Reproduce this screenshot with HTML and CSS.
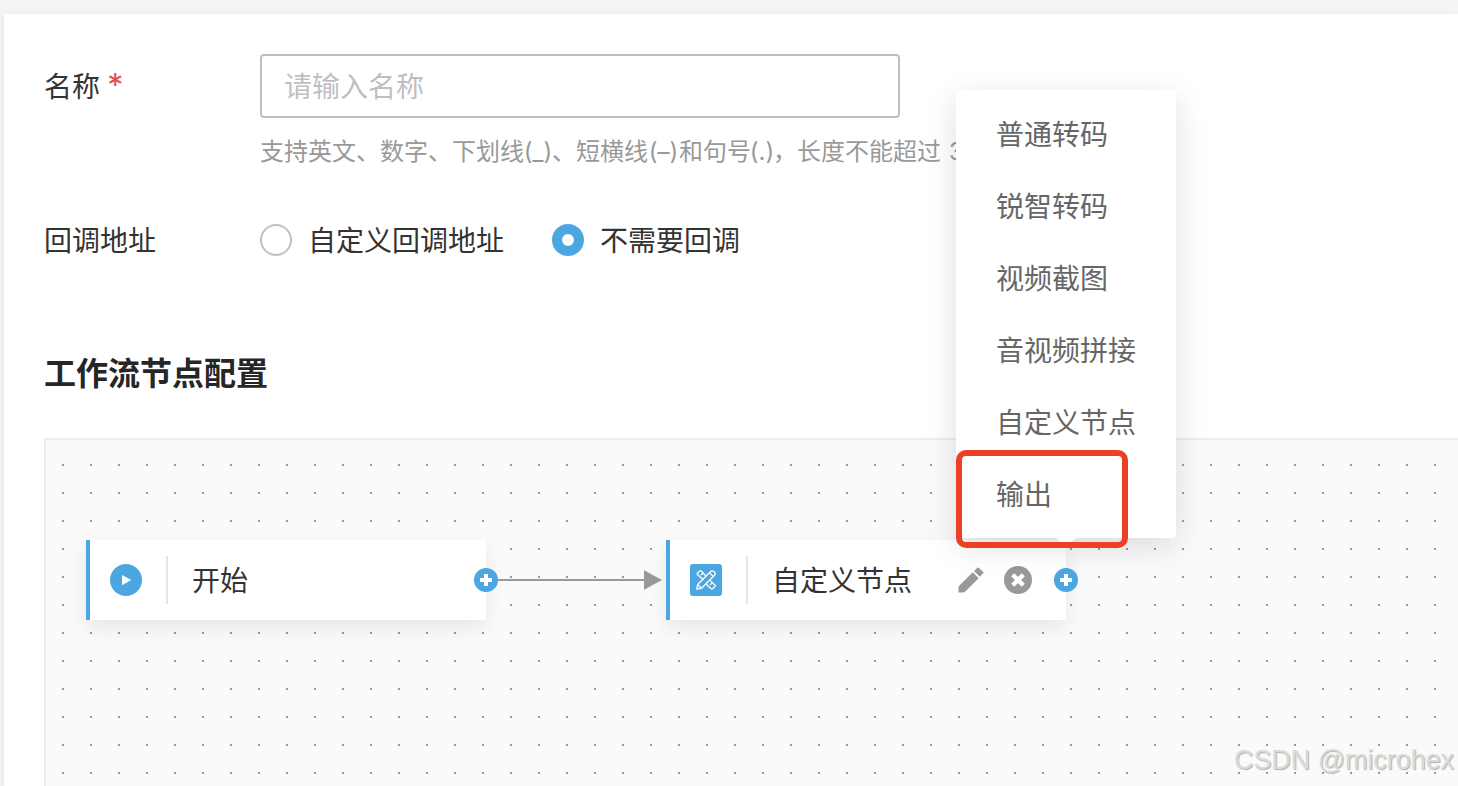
FILE: index.html
```
<!DOCTYPE html>
<html lang="zh-CN">
<head>
  <meta charset="UTF-8">
  <meta name="viewport" content="width=device-width, initial-scale=1.0">
  <title>工作流</title>
  <link rel="stylesheet" href="styles.css">
</head>
<body>
  <div class="panel">
    <div class="form-row name-row">
      <label class="label" for="name">名称 <span class="required">*</span></label>
      <div class="field">
        <input type="text" class="input" id="name" placeholder="请输入名称">
        <p class="hint">支持英文、数字、下划线<span class="underscore">(_)</span>、短横线<span class="dash">(–)</span>和句号<span class="dot">(.)</span>，长度不能超过<span class="count">3</span></p>
      </div>
    </div>

    <div class="form-row callback-row">
      <div class="label">回调地址</div>
      <div class="radios">
        <div class="radio"><span class="circle"></span>自定义回调地址</div>
        <div class="radio"><span class="circle checked"></span>不需要回调</div>
      </div>
    </div>

    <h2>工作流节点配置</h2>

    <div class="canvas">
      <svg class="link" width="166" height="20" viewBox="0 0 166 20">
        <path d="M0 10H148" stroke="#999" stroke-width="2"/>
        <path d="M148 .3L166 10L148 19.7z" fill="#999"/>
      </svg>

      <div class="node start">
        <svg width="32" height="32" viewBox="0 0 32 32">
          <circle cx="16" cy="16" r="16" fill="#4ba6e1"/>
          <path d="M12 11L21.3 16L12 21.2z" fill="#fff"/>
        </svg>
        <span class="divider"></span>
        <span class="title">开始</span>
        <svg class="plus" width="24" height="24" viewBox="0 0 24 24">
          <circle cx="12" cy="12" r="12" fill="#4ba6e1"/>
          <path d="M12 6V18M6 12H18" stroke="#fff" stroke-width="4"/>
        </svg>
      </div>

      <div class="node custom">
        <svg width="32" height="32" viewBox="0 0 32 32">
          <rect width="32" height="32" rx="3" fill="#4ba6e1"/>
          <g fill="none" stroke="#fff" stroke-width="1.3" stroke-linejoin="round" stroke-linecap="round">
            <path d="M13 15.5L7.4 10.4Q6.8 9.8 7.4 9.2L9.8 6.9Q10.5 6.3 11.2 6.9L15.8 12M20.4 16.6L25 21.2Q25.6 21.9 25 22.5L22.5 24.8Q21.8 25.4 21.1 24.8L16.2 20"/>
            <path d="M11.2 10.8L12.8 9.2M20.4 20.6L22.2 18.8"/>
            <path d="M6.8 25.2L7.6 20.5L20.7 7.5Q22.3 6 24.2 7.8Q26.1 9.7 24.5 11.3L11.5 24.3z"/>
            <path d="M7.8 20.7L11.3 24.2M19.5 8.7L23.3 12.5"/>
          </g>
        </svg>
        <span class="divider"></span>
        <span class="title">自定义节点</span>
        <svg class="edit" width="28" height="28" viewBox="0 0 28 28">
          <path d="M1.5 20.5L15.7 6.2L21.7 12.2L7.2 26.5H1.5zM17 5L21 1.3L26.8 6.5L22.8 10.8z" fill="#999"/>
        </svg>
        <svg class="remove" width="28" height="28" viewBox="0 0 28 28">
          <circle cx="14" cy="14" r="14" fill="#999"/>
          <path d="M8.7 8.7L19.3 19.3M19.3 8.7L8.7 19.3" stroke="#fff" stroke-width="4.4"/>
        </svg>
        <svg class="plus" width="24" height="24" viewBox="0 0 24 24">
          <circle cx="12" cy="12" r="12" fill="#4ba6e1"/>
          <path d="M12 6V18M6 12H18" stroke="#fff" stroke-width="4"/>
        </svg>
      </div>
    </div>
  </div>

  <ul class="menu">
    <li>普通转码</li>
    <li>锐智转码</li>
    <li>视频截图</li>
    <li>音视频拼接</li>
    <li>自定义节点</li>
    <li>输出</li>
  </ul>
  <div class="highlight"></div>
  <div class="watermark">CSDN @microhex</div>
</body>
</html>
```
FILE: styles.css
```
* {
  box-sizing: border-box;
}
body {
  position: relative;
  margin: 0;
  height: 786px;
  padding: 14px 0 0 4px;
  overflow: hidden;
  background-color: #f4f4f4;
  color: #333;
  font-family: "Noto Sans CJK SC", sans-serif;
  font-size: 28px;
}
.panel {
  display: flex;
  flex-direction: column;
  height: 772px;
  padding: 40px 0 0 40px;
  background-color: #fff;
  box-shadow: 0 2px 6px rgba(0, 0, 0, 0.08);
}
.form-row {
  display: flex;
}
.label {
  width: 216px;
  line-height: 62px;
}
.name-row {
  height: 154px;
}
.required {
  margin-left: 1px;
  color: #e1504a;
  font-family: Inter, sans-serif;
  font-size: 32px;
  line-height: 1;
}
.input {
  display: block;
  width: 640px;
  height: 64px;
  padding: 0 22px 2px;
  border: 2px solid #bfbfbf;
  border-radius: 4px;
  outline: none;
  font: inherit;
}
.input::placeholder {
  color: #bfbfbf;
}
.hint {
  margin: 14px 0 0;
  color: #999;
  font-size: 24px;
  line-height: 36px;
  white-space: nowrap;
}
.hint span {
  display: inline-flex;
  justify-content: center;
  font-family: Inter, sans-serif;
}
.underscore {
  width: 28px;
}
.dash {
  width: 31px;
}
.dot {
  width: 22px;
}
.count {
  margin-left: 8px;
}
.callback-row {
  height: 64px;
}
.radios {
  display: flex;
  align-items: center;
  gap: 48px;
}
.radio {
  display: flex;
  gap: 16px;
  height: 32px;
  line-height: 30px;
}
.circle {
  width: 32px;
  height: 32px;
  border: 2px solid #bfbfbf;
  border-radius: 50%;
}
.checked {
  border: 10px solid #4ba6e1;
}
h2 {
  margin: 75px 0 0;
  color: #262626;
  font-size: 32px;
  line-height: 48px;
}
.canvas {
  position: relative;
  flex: 1;
  margin-top: 43px;
  border: 2px solid #ececec;
  border-width: 2px 0 0 2px;
  background: radial-gradient(circle at 1px 1px, #999 1.2px, transparent 1.2px) 16px 24px / 28px 28px #fafafa;
}
.node {
  position: absolute;
  top: 100px;
  display: flex;
  align-items: center;
  width: 400px;
  height: 80px;
  padding-left: 20px;
  border-left: 4px solid #4ba6e1;
  background-color: #fff;
  box-shadow: 0 8px 20px rgba(0, 0, 0, 0.08);
}
.title {
  padding-bottom: 2px;
}
.start {
  left: 40px;
}
.custom {
  left: 620px;
}
.divider {
  width: 2px;
  height: 48px;
  margin: 0 24px;
  background-color: #e5e5e5;
}
.edit {
  margin-left: 45px;
}
.remove {
  margin-left: 19px;
}
.plus {
  position: absolute;
  top: 28px;
  right: -12px;
}
.link {
  position: absolute;
  top: 130px;
  left: 450px;
}
.menu {
  position: absolute;
  top: 90px;
  left: 956px;
  width: 220px;
  margin: 0;
  padding: 7px 0 9px;
  border-radius: 4px;
  background-color: #fff;
  box-shadow: 0 8px 32px rgba(0, 0, 0, 0.13);
  color: #666;
  list-style: none;
}
.menu::after {
  content: "";
  position: absolute;
  top: 100%;
  left: 100px;
  border: 10px solid transparent;
  border-top: 8px solid #fff;
  border-bottom: none;
}
.menu li {
  padding-left: 40px;
  line-height: 72px;
}
.highlight {
  position: absolute;
  top: 450px;
  left: 956px;
  width: 172px;
  height: 98px;
  border: 6px solid #ec4025;
  border-radius: 10px;
}
.watermark {
  position: absolute;
  top: 744px;
  left: 1234px;
  color: #dadada;
  font-family: "Liberation Sans", sans-serif;
  font-size: 26.9px;
  line-height: 32px;
  text-shadow: 1px 1px 1px #b0b0b0;
  white-space: nowrap;
}
```
